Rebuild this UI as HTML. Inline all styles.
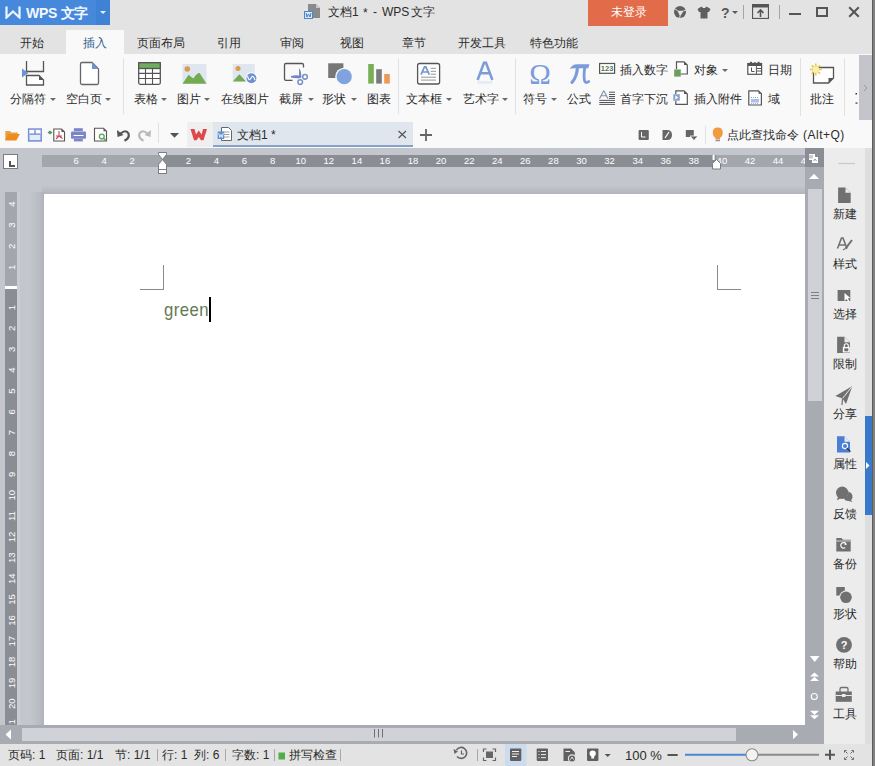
<!DOCTYPE html>
<html><head><meta charset="utf-8">
<style>
*{box-sizing:border-box;margin:0;padding:0}
html,body{width:875px;height:766px;overflow:hidden;background:#808080}
body{position:relative;font-family:"Liberation Sans",sans-serif;font-size:12px;color:#333}
.a{position:absolute}
.t{position:absolute;white-space:nowrap;line-height:1;font-size:12px;color:#2b2b2b}
#win{position:absolute;left:0;top:0;width:872px;height:766px;background:#e3e3e3;overflow:hidden}
.sep{position:absolute;width:1px;background:#e1e1e1}
.dd{position:absolute;width:0;height:0;border-left:3px solid transparent;border-right:3px solid transparent;border-top:3px solid #6a6a6a}
.rn{position:absolute;top:157px;font-size:10px;line-height:1;color:#fff;transform:translateX(-50%);white-space:nowrap}
.vn{position:absolute;left:6px;width:10px;font-size:10px;line-height:10px;color:#fff;text-align:center;transform:rotate(-90deg)}
.sb{position:absolute;left:824px;width:41px;text-align:center}
</style></head><body>
<div id="win">
  <!-- title bar -->
  <div class="a" style="left:0;top:0;width:110px;height:25px;background:#4689dc"></div>
  <div class="a" style="left:96px;top:0;width:14px;height:25px;background:#3f82d5"></div>
  <svg class="a" style="left:5px;top:5px" width="16" height="14" viewBox="0 0 16 14"><path d="M1.5 1.5 V12.5 L8 6.5 L14.5 12.5 V1.5" fill="none" stroke="#eef6ff" stroke-width="2.2" stroke-linejoin="miter"/></svg>
  <div class="t" style="left:26px;top:6px;font-size:14px;font-weight:bold;color:#f4f8ff;letter-spacing:-0.3px">WPS 文字</div>
  <div class="a" style="left:100px;top:11px;width:0;height:0;border-left:3px solid transparent;border-right:3px solid transparent;border-top:3px solid #e8f0fa"></div>
  <svg class="a" style="left:303px;top:3px" width="20" height="17" viewBox="0 0 20 17"><path d="M5 1 H13 L17 5 V15 H5 Z" fill="#8a8a8a"/><path d="M13 1 V5 H17" fill="#c8c8c8"/><rect x="1.5" y="8.5" width="8" height="7" fill="#dfeaf7" stroke="#4a86cf"/><path d="M3 10 L4 14 L5.5 11 L7 14 L8 10" fill="none" stroke="#3d7cc9" stroke-width="1"/></svg>
  <div class="t" style="left:328px;top:6px;font-size:12px;color:#2b2b2b">文档1</div><div class="t" style="left:363px;top:7px;font-size:12px;color:#2b2b2b">*</div><div class="t" style="left:373px;top:6px;font-size:12px;color:#2b2b2b">-</div><div class="t" style="left:382px;top:6px;font-size:12px;color:#2b2b2b;letter-spacing:0px">WPS</div><div class="t" style="left:411px;top:6px;font-size:12px;color:#2b2b2b">文字</div>
  <div class="a" style="left:588px;top:0;width:80px;height:26px;background:#e26b4a"></div>
  <div class="t" style="left:611px;top:6px;font-size:12px;color:#fff">未登录</div>
  <svg class="a" style="left:673px;top:5px" width="15" height="15" viewBox="0 0 15 15"><circle cx="7" cy="7" r="6" fill="#5f5f5f"/><path d="M4 5.3 Q7.5 6.3 11 5.5 Q9 8.5 7 11.5 Q6 8.3 4 5.3 Z" fill="#e3e3e3"/><path d="M1.5 3.8 L4.3 5.5 M13 5 L10.8 5.8 M6.6 13.2 L7 11" stroke="#e3e3e3" stroke-width="0.9"/></svg>
  <svg class="a" style="left:697px;top:6px" width="14" height="13" viewBox="0 0 14 13"><path d="M4.5 0.5 L6 2 H8 L9.5 0.5 L13.5 3 L12 6 H10.5 V12.5 H3.5 V6 H2 L0.5 3 Z" fill="#5e5e5e"/></svg>
  <div class="t" style="left:721px;top:6px;font-size:14px;color:#5a5a5a;font-weight:bold">?</div>
  <div class="a" style="left:732px;top:11px;width:0;height:0;border-left:3px solid transparent;border-right:3px solid transparent;border-top:3px solid #5a5a5a"></div>
  <div class="a" style="left:743px;top:5px;width:1px;height:14px;background:#a5a5a5"></div>
  <svg class="a" style="left:752px;top:4px" width="17" height="15" viewBox="0 0 17 15"><rect x="0.5" y="0" width="16" height="3.5" fill="#555"/><rect x="0.5" y="0.5" width="16" height="14" fill="none" stroke="#555" stroke-width="1.2"/><path d="M8.5 13 V6 M5.5 9 L8.5 6 L11.5 9" fill="none" stroke="#555" stroke-width="1.6"/></svg>
  <div class="a" style="left:779px;top:5px;width:1px;height:14px;background:#a5a5a5"></div>
  <div class="a" style="left:789px;top:13px;width:12px;height:2px;background:#555"></div>
  <div class="a" style="left:816px;top:7px;width:12px;height:10px;border:2px solid #555;border-top-width:2px"></div>
  <svg class="a" style="left:848px;top:6px" width="12" height="12" viewBox="0 0 12 12"><path d="M1.2 1.2 L10.8 10.8 M10.8 1.2 L1.2 10.8" stroke="#555" stroke-width="2"/></svg>

  <!-- tabs -->
  <div class="a" style="left:66px;top:30px;width:58px;height:24px;background:#f9f9f9"></div>
  <div class="t" style="left:20px;top:37px">开始</div>
  <div class="t" style="left:83px;top:37px;color:#2d5a8e">插入</div>
  <div class="t" style="left:137px;top:37px">页面布局</div>
  <div class="t" style="left:217px;top:37px">引用</div>
  <div class="t" style="left:280px;top:37px">审阅</div>
  <div class="t" style="left:340px;top:37px">视图</div>
  <div class="t" style="left:402px;top:37px">章节</div>
  <div class="t" style="left:458px;top:37px">开发工具</div>
  <div class="t" style="left:530px;top:37px">特色功能</div>

  <!-- ribbon -->
  <div class="a" style="left:0;top:54px;width:872px;height:94px;background:#f9f9f9"></div>
  <div class="t" style="left:10px;top:93px">分隔符</div><div class="dd" style="left:50px;top:98px"></div>
  <div class="t" style="left:66px;top:93px">空白页</div><div class="dd" style="left:105px;top:98px"></div>
  <div class="sep" style="left:123px;top:58px;height:56px"></div>
  <div class="t" style="left:134px;top:93px">表格</div><div class="dd" style="left:161px;top:98px"></div>
  <div class="t" style="left:177px;top:93px">图片</div><div class="dd" style="left:204px;top:98px"></div>
  <div class="t" style="left:221px;top:93px">在线图片</div>
  <div class="t" style="left:279px;top:93px">截屏</div><div class="dd" style="left:308px;top:98px"></div>
  <div class="t" style="left:322px;top:93px">形状</div><div class="dd" style="left:351px;top:98px"></div>
  <div class="t" style="left:367px;top:93px">图表</div>
  <div class="sep" style="left:398px;top:58px;height:56px"></div>
  <div class="t" style="left:406px;top:93px">文本框</div><div class="dd" style="left:446px;top:98px"></div>
  <div class="t" style="left:463px;top:93px">艺术字</div><div class="dd" style="left:502px;top:98px"></div>
  <div class="sep" style="left:515px;top:58px;height:56px"></div>
  <div class="t" style="left:523px;top:93px">符号</div><div class="dd" style="left:551px;top:98px"></div>
  <div class="t" style="left:567px;top:93px">公式</div>
  <div class="t" style="left:620px;top:64px">插入数字</div>
  <div class="t" style="left:620px;top:93px">首字下沉</div>
  <div class="t" style="left:694px;top:64px">对象</div><div class="dd" style="left:722px;top:69px"></div>
  <div class="t" style="left:694px;top:93px">插入附件</div>
  <div class="t" style="left:768px;top:64px">日期</div>
  <div class="t" style="left:768px;top:93px">域</div>
  <div class="sep" style="left:800px;top:58px;height:58px"></div>
  <div class="t" style="left:810px;top:93px">批注</div>
  <div class="sep" style="left:844px;top:58px;height:58px"></div>
  <div class="a" style="left:859px;top:55px;width:13px;height:65px;background:#c4c5ca"></div>

  <!-- QAT + doc tab -->
  <div class="sep" style="left:158px;top:123px;height:20px"></div>
  <div class="a" style="left:187px;top:122px;width:26px;height:25px;background:#efefef"></div>
  <div class="a" style="left:213px;top:122px;width:200px;height:25px;background:#dfe6ee;border-bottom:2px solid #86a3c6"></div>
  <div class="t" style="left:237px;top:129px">文档1 *</div>
  <div class="t" style="left:727px;top:129px">点此查找命令</div><div class="t" style="left:803px;top:129px;letter-spacing:0.5px">(Alt+Q)</div>
  <div class="sep" style="left:705px;top:126px;height:18px"></div>

  <!-- workspace -->
  <div class="a" style="left:0;top:148px;width:872px;height:596px;background:#c4c6cd"></div>
  <div class="a" style="left:3px;top:154px;width:15px;height:15px;background:#fff;border:1px solid #7a7b80"></div>
  <div class="a" style="left:9px;top:161px;width:2px;height:6px;background:#555"></div><div class="a" style="left:9px;top:165px;width:6px;height:2px;background:#555"></div>
  <div class="a" style="left:42px;top:155px;width:763px;height:12px;background:#a4a6ae"></div>
  <div class="a" style="left:162px;top:155px;width:554px;height:12px;background:#8b8d95"></div>
  <div class="a" style="left:5px;top:192px;width:12px;height:533px;background:#8b8d95"></div>
  <div class="a" style="left:5px;top:192px;width:12px;height:94px;background:#a4a6ae"></div>
  <div class="a" style="left:5px;top:286px;width:12px;height:3px;background:#fff"></div>
  <div class="a" style="left:42px;top:186px;width:763px;height:8px;background:linear-gradient(#c3c5cc,#b3b5bc)"></div>
  <div class="a" style="left:30px;top:192px;width:14px;height:533px;background:linear-gradient(90deg,rgba(176,178,185,0),rgba(176,178,185,0.55) 70%,#b0b2b9)"></div>
  <div class="a" style="left:17px;top:192px;width:3px;height:533px;background:#cbccd3"></div>
  <div class="a" style="left:44px;top:194px;width:761px;height:531px;background:#fff"></div>

  <!-- v scrollbar -->
  <div class="a" style="left:805px;top:148px;width:19px;height:596px;background:#a9abb3"></div>
  <div class="a" style="left:808px;top:189px;width:14px;height:212px;background:#d0d1d6"></div>
  <!-- h scrollbar -->
  <div class="a" style="left:0;top:725px;width:805px;height:19px;background:#a9abb3"></div>
  <div class="a" style="left:22px;top:728px;width:714px;height:13px;background:#d1d2d7"></div>

  <!-- sidebar -->
  <div class="a" style="left:824px;top:148px;width:41px;height:596px;background:#ececec"></div>
  <div class="a" style="left:865px;top:148px;width:7px;height:596px;background:#dedede"></div>
  <div class="a" style="left:865px;top:416px;width:7px;height:99px;background:#3a78c9"></div>
  <div class="t sb" style="top:208px">新建</div>
  <div class="t sb" style="top:258px">样式</div>
  <div class="t sb" style="top:308px">选择</div>
  <div class="t sb" style="top:358px">限制</div>
  <div class="t sb" style="top:408px">分享</div>
  <div class="t sb" style="top:458px">属性</div>
  <div class="t sb" style="top:508px">反馈</div>
  <div class="t sb" style="top:558px">备份</div>
  <div class="t sb" style="top:608px">形状</div>
  <div class="t sb" style="top:658px">帮助</div>
  <div class="t sb" style="top:708px">工具</div>

  <!-- page content -->
  <div class="a" style="left:163px;top:265px;width:1px;height:25px;background:#8a8a8a"></div>
  <div class="a" style="left:140px;top:289px;width:24px;height:1px;background:#8a8a8a"></div>
  <div class="a" style="left:717px;top:265px;width:1px;height:25px;background:#8a8a8a"></div>
  <div class="a" style="left:717px;top:289px;width:24px;height:1px;background:#8a8a8a"></div>
  <div class="t" style="left:164px;top:300px;font-size:19px;color:#637a52;transform:scaleX(0.88);transform-origin:0 0;letter-spacing:0.5px">green</div>
  <div class="a" style="left:209px;top:297px;width:2px;height:25px;background:#000"></div>

  <!-- status bar -->
  <div class="t" style="left:8px;top:749px">页码: 1</div>
  <div class="t" style="left:56px;top:749px">页面: 1/1</div>
  <div class="t" style="left:115px;top:749px">节: 1/1</div>
  <div class="t" style="left:162px;top:749px">行: 1</div>
  <div class="t" style="left:194px;top:749px">列: 6</div>
  <div class="t" style="left:232px;top:749px">字数: 1</div>
  <div class="t" style="left:289px;top:749px">拼写检查</div>
  <div class="t" style="left:625px;top:749px;font-size:13px">100 %</div>

  <svg class="a" style="left:0;top:0" width="872" height="766" viewBox="0 0 872 766">
    <defs><clipPath id="hr"><rect x="42" y="150" width="763" height="20"/></clipPath><clipPath id="vr"><rect x="0" y="192" width="20" height="533"/></clipPath></defs>
    <g clip-path="url(#hr)" font-family="Liberation Sans" font-size="9.5" fill="#fff" text-anchor="middle"><text x="76.1" y="164">6</text><text x="104.1" y="164">4</text><text x="132.2" y="164">2</text><text x="188.4" y="164">2</text><text x="216.5" y="164">4</text><text x="244.5" y="164">6</text><text x="272.6" y="164">8</text><text x="300.7" y="164">10</text><text x="328.8" y="164">12</text><text x="356.9" y="164">14</text><text x="384.9" y="164">16</text><text x="413.0" y="164">18</text><text x="441.1" y="164">20</text><text x="469.2" y="164">22</text><text x="497.3" y="164">24</text><text x="525.3" y="164">26</text><text x="553.4" y="164">28</text><text x="581.5" y="164">30</text><text x="609.6" y="164">32</text><text x="637.7" y="164">34</text><text x="665.7" y="164">36</text><text x="693.8" y="164">38</text><text x="721.9" y="164">40</text><text x="750.0" y="164">42</text><text x="778.1" y="164">44</text><text x="806.1" y="164">46</text></g>
    <g clip-path="url(#vr)" font-family="Liberation Sans" font-size="9.5" fill="#fff" text-anchor="middle"><text transform="translate(15,267.4) rotate(-90)">1</text><text transform="translate(15,246.3) rotate(-90)">2</text><text transform="translate(15,225.2) rotate(-90)">3</text><text transform="translate(15,204.1) rotate(-90)">4</text><text transform="translate(15,307.6) rotate(-90)">1</text><text transform="translate(15,328.4) rotate(-90)">2</text><text transform="translate(15,349.3) rotate(-90)">3</text><text transform="translate(15,370.1) rotate(-90)">4</text><text transform="translate(15,391.0) rotate(-90)">5</text><text transform="translate(15,411.9) rotate(-90)">6</text><text transform="translate(15,432.7) rotate(-90)">7</text><text transform="translate(15,453.6) rotate(-90)">8</text><text transform="translate(15,474.4) rotate(-90)">9</text><text transform="translate(15,495.2) rotate(-90)">10</text><text transform="translate(15,516.1) rotate(-90)">11</text><text transform="translate(15,537.0) rotate(-90)">12</text><text transform="translate(15,557.8) rotate(-90)">13</text><text transform="translate(15,578.7) rotate(-90)">14</text><text transform="translate(15,599.5) rotate(-90)">15</text><text transform="translate(15,620.4) rotate(-90)">16</text><text transform="translate(15,641.2) rotate(-90)">17</text><text transform="translate(15,662.0) rotate(-90)">18</text><text transform="translate(15,682.9) rotate(-90)">19</text><text transform="translate(15,703.8) rotate(-90)">20</text><text transform="translate(15,724.6) rotate(-90)">21</text></g>
    <!-- left indent marker -->
    <path d="M158.5 152.5 H166.5 V154.5 L162.5 159.5 L166.5 164.5 V169.5 H158.5 V164.5 L162.5 159.5 L158.5 154.5 Z" fill="#fff" stroke="#7b7d84" stroke-width="1"/>
    <rect x="158.5" y="169.5" width="8" height="4" fill="#fff" stroke="#7b7d84" stroke-width="1"/>
    <!-- right indent marker -->
    <path d="M712.5 169 V163.5 L716.5 159.5 L720.5 163.5 V169 Z" fill="#fff" stroke="#7b7d84" stroke-width="1"/>
    <rect x="712.6" y="155" width="2" height="5" fill="#fff"/>
    <!-- v scroll top dark & icon -->
    <rect x="805" y="148" width="19" height="19" fill="#8b8d94"/>
    <path d="M809 154 H815 V157 H818 V163 H812 V160 H809 Z" fill="#fff"/>
    <path d="M810 155 V158.5 M812 155 V158.5 M813.5 161 L815 159 L816.5 161" stroke="#8b8d94" stroke-width="0.9" fill="none"/>
    <path d="M809 179 L814 173.8 L819 179 Z" fill="#fff"/>
    <path d="M811 292.5 H819 M811 295.5 H819 M811 298.5 H819" stroke="#7d7f86" stroke-width="1"/>
    <path d="M809.8 656 H819.6 L814.7 662 Z" fill="#fff"/>
    <path d="M810 676.5 L814.5 672.4 L819 676.5 Z M810 680.9 L814.5 676.8 L819 680.9 Z" fill="#fff"/>
    <circle cx="814.3" cy="696.5" r="3" fill="none" stroke="#fff" stroke-width="1.1"/>
    <path d="M810 710.8 L814.5 714.9 L819 710.8 Z M810 715.2 L814.5 719.3 L819 715.2 Z" fill="#fff"/>
    <!-- h scroll -->
    <path d="M11 729.5 L5.5 734.5 L11 739.5 Z" fill="#fff"/>
    <path d="M793 730 L798 734.6 L793 739.3 Z" fill="#fff"/>
    <path d="M374.5 729 V737.5 M378.5 729 V737.5 M382.5 729 V737.5" stroke="#6e6e73" stroke-width="1"/>
    <!-- sidebar top line -->
    <path d="M838.5 163.5 H855" stroke="#c9c9c9" stroke-width="1.2"/>
  </svg>

  <svg class="a" style="left:0;top:0" width="872" height="766" viewBox="0 0 872 766">
    <!-- sidebar icons -->
    <path d="M838.1 187.6 H845.5 L850.7 192.8 V202.9 H838.1 Z" fill="#707070"/>
    <path d="M845.5 187.6 V192.8 H850.7 Z" fill="#ececec"/>
    <path d="M837.5 248.5 L841.5 238 H843 L847 248.5 M839 245 H845.5" fill="none" stroke="#707070" stroke-width="1.6"/>
    <path d="M845.5 248.6 L852 240" stroke="#707070" stroke-width="2"/>
    <path d="M843 250 L845.5 248.6" stroke="#707070" stroke-width="1.2"/>
    <rect x="837.6" y="290" width="12.7" height="11" fill="#707070"/>
    <path d="M844.5 293 V301 L846.5 299 L848.5 302 L849.5 301.3 L847.8 298.5 L850.3 298 Z" fill="#fff"/>
    <path d="M837.1 336.8 H844.5 L849.9 342.2 V353 H837.1 Z" fill="#707070"/>
    <path d="M844.5 336.8 V342.2 H849.9 Z" fill="#ececec"/>
    <rect x="842.8" y="347" width="7" height="5.5" fill="#fff"/>
    <path d="M844.3 347 V345 Q846.3 342.5 848.3 345 V347" fill="none" stroke="#fff" stroke-width="1.2"/>
    <rect x="844.3" y="348.3" width="4" height="3" fill="#707070"/>
    <path d="M835.4 396 L852.4 386 L846 404 L842.5 398.5 Z" fill="#707070"/>
    <path d="M842.5 398.5 L852.4 386" stroke="#ececec" stroke-width="1"/>
    <path d="M842.5 398.5 L842 405" stroke="#707070" stroke-width="1.2"/>
    <path d="M837 436.3 H844.5 L850 441.8 V452.4 H837 Z" fill="#4a7fd4"/>
    <path d="M844.5 436.3 V441.8 H850 Z" fill="#ececec"/>
    <circle cx="845" cy="446" r="2.6" fill="#4a7fd4" stroke="#fff" stroke-width="1.1"/>
    <path d="M846.8 448 L850.5 451.7" stroke="#333" stroke-width="1.2"/>
    <circle cx="842.2" cy="492.8" r="6.2" fill="#707070"/>
    <path d="M838 497 L836.8 500.5 L841 498 Z" fill="#707070"/>
    <path d="M848.5 491.5 Q852.5 493 852.5 496.5 Q852.5 499 851 500 L852.5 502 L848.5 501 Q845 501 844 498.5 Q848 497.5 848.5 491.5 Z" fill="#707070"/>
    <path d="M836.3 538 H841.5 L843 539.8 H850.7 V551.4 H836.3 Z" fill="#707070"/>
    <path d="M836.3 541 H850.7" stroke="#ececec" stroke-width="0.8"/>
    <path d="M846 544 A2.8 2.8 0 1 0 845.3 547.6" fill="none" stroke="#fff" stroke-width="1.2"/>
    <path d="M845 542.5 L847 544.5 L844.5 545.2 Z" fill="#fff"/>
    <rect x="836.3" y="587" width="8.5" height="8.6" fill="#707070"/>
    <circle cx="846" cy="597.3" r="6.8" fill="#ececec"/>
    <circle cx="846" cy="597.3" r="5.8" fill="#707070"/>
    <circle cx="844" cy="644.9" r="7.9" fill="#707070"/>
    <text x="844" y="649" font-family="Liberation Sans" font-weight="bold" font-size="11" fill="#fff" text-anchor="middle">?</text>
    <path d="M840 692 V689 Q840 687.5 841.5 687.5 H846.5 Q848 687.5 848 689 V692" fill="none" stroke="#707070" stroke-width="1.3"/>
    <rect x="835.7" y="691.5" width="16.1" height="10.3" fill="#707070"/>
    <path d="M835.7 695.5 H851.8" stroke="#ececec" stroke-width="1"/>
    <rect x="842" y="694" width="3.5" height="3" fill="#ececec"/>
    <path d="M866 462 L869.5 465.5 L866 469 Z" fill="#fff"/>

    <!-- status bar icons -->
    <path d="M477.5 749 V761 M157.5 749 V761 M225.5 749 V761 M274.5 749 V761 M340.5 749 V761" stroke="#a8a8a8" stroke-width="1"/>
    <path d="M456.5 750 A5.5 5.5 0 1 1 457 756.5" fill="none" stroke="#666" stroke-width="1.6"/>
    <path d="M453.5 749 L458 751.5 L454.5 754 Z" fill="#666"/>
    <path d="M461.5 750.5 V754 H464" fill="none" stroke="#666" stroke-width="1.2"/>
    <path d="M483.5 752 V749 H486.5 M492.5 749 H495.5 V752 M495.5 757.5 V760.5 H492.5 M486.5 760.5 H483.5 V757.5" fill="none" stroke="#666" stroke-width="1.2"/>
    <rect x="486" y="751.5" width="7" height="6.5" fill="#666"/>
    <rect x="505" y="744" width="21.5" height="22" fill="#cddbee"/>
    <rect x="510" y="748.5" width="11.3" height="12.4" rx="0.8" fill="#606060"/>
    <path d="M512 751.5 H519 M512 754 H519 M512 756.5 H517" stroke="#fff" stroke-width="0.9"/>
    <rect x="536.7" y="748.5" width="11.3" height="12.4" rx="0.8" fill="#606060"/>
    <path d="M538.5 751.5 H539.5 M541 751.5 H546 M538.5 754.6 H539.5 M541 754.6 H546 M538.5 757.7 H539.5 M541 757.7 H546" stroke="#fff" stroke-width="0.9"/>
    <path d="M563.5 748.5 H571 L574.8 752.3 V760.9 H563.5 Z" fill="#606060"/>
    <path d="M565.5 751.5 H570" stroke="#fff" stroke-width="0.9"/>
    <circle cx="572" cy="758.5" r="3.6" fill="#606060" stroke="#e3e3e3" stroke-width="1.2"/>
    <path d="M570.5 759.5 L572 757 L573.5 759.5" fill="none" stroke="#fff" stroke-width="0.8"/>
    <rect x="587" y="748.5" width="11.4" height="12.4" rx="0.8" fill="#606060"/>
    <path d="M592.7 750.5 Q589.5 750.5 589.5 753.5 Q589.5 755.5 591.3 756.5 V758.5 H594.1 V756.5 Q595.9 755.5 595.9 753.5 Q595.9 750.5 592.7 750.5 Z" fill="#fff"/>
    <path d="M604.6 754 H610.8 L607.7 757 Z" fill="#555"/>
    <path d="M667.5 755 H677.7" stroke="#555" stroke-width="2"/>
    <path d="M685 754.8 H746" stroke="#4a86d4" stroke-width="2"/>
    <path d="M746 754.8 H819" stroke="#8a8a8a" stroke-width="2"/>
    <circle cx="752" cy="754.8" r="6" fill="#f3f3f3" stroke="#8a8a8a" stroke-width="1.1"/>
    <path d="M825 754.8 H835 M830 749.8 V759.8" stroke="#555" stroke-width="2"/>
    <path d="M844.5 752.5 V750.5 H846.5 M851.5 750.5 H853.5 V752.5 M853.5 757.5 V759.5 H851.5 M846.5 759.5 H844.5 V757.5 M845.5 751.5 L847.5 753.5 M852.5 751.5 L850.5 753.5 M852.5 758.5 L850.5 756.5 M845.5 758.5 L847.5 756.5" fill="none" stroke="#666" stroke-width="1"/>
    <rect x="278.5" y="752.5" width="6.5" height="7" fill="#4fae4a"/>
  </svg>

  <!-- icon overlay -->
  <svg class="a" style="left:0;top:0" width="872" height="766" viewBox="0 0 872 766">
    <!-- 分隔符 -->
    <path d="M26.5 61 V71.5 H43.5 V61" fill="none" stroke="#555" stroke-width="1.3"/>
    <path d="M26.5 85 V75.5 H39 L43.5 80 V85 Z" fill="#fff" stroke="#555" stroke-width="1.3"/>
    <path d="M39 75.5 V80 H43.5 Z" fill="#555"/>
    <path d="M22 68.5 L28.5 73 L22 77.5 Z" fill="#6d93d6"/>
    <!-- 空白页 -->
    <path d="M80.5 64 Q80.5 62.5 82 62.5 H92 L98.5 69 V83 Q98.5 84.5 97 84.5 H82 Q80.5 84.5 80.5 83 Z" fill="#fff" stroke="#666" stroke-width="1.3"/>
    <path d="M92 62.5 L98.5 69 H92 Z" fill="#6d93d6"/>
    <!-- 表格 -->
    <rect x="138.7" y="62.7" width="21.6" height="21.6" rx="1.5" fill="#fff" stroke="#555" stroke-width="1.3"/>
    <rect x="138.7" y="62.7" width="21.6" height="5.8" fill="#6fae5f" stroke="#555" stroke-width="1.3"/>
    <path d="M145.5 68.5 V84.3 M152.5 68.5 V84.3 M138.7 73.4 H160.3 M138.7 78.5 H160.3" stroke="#555" stroke-width="1.1"/>
    <!-- 图片 -->
    <rect x="182.5" y="64" width="24" height="19.7" fill="#dfe6ef"/>
    <circle cx="187.3" cy="69" r="2.8" fill="#da9a52"/>
    <path d="M182.5 83.7 L188.6 74.8 Q191 77 193.4 78.6 Q196.5 72.9 199.6 72.9 L206.5 83.7 Z" fill="#74aa52"/>
    <!-- 在线图片 -->
    <rect x="232.7" y="64" width="22" height="17.5" fill="#dfe6ef"/>
    <circle cx="238" cy="68.6" r="2.5" fill="#da9a52"/>
    <path d="M232.7 81.5 L239.4 74.3 L246 81.5 Z" fill="#74aa52"/>
    <circle cx="251.4" cy="78.2" r="6" fill="#fff"/>
    <circle cx="251.4" cy="78.2" r="5" fill="#6f8fd0"/>
    <path d="M247.5 76 Q249 82 251 78 Q253 74 255 80" fill="none" stroke="#fff" stroke-width="1.1"/>
    <!-- 截屏 -->
    <path d="M292.5 80.4 H286 Q284.5 80.4 284.5 79 V65 Q284.5 63.5 286 63.5 H302 Q303.5 63.5 303.5 65 V67.5" fill="none" stroke="#555" stroke-width="1.3"/>
    <path d="M299 68 Q301.8 71.5 301.2 78 H299.2 Z" fill="#6f86c2"/>
    <path d="M291 76 Q296 74.8 300.5 75.8 V78 Q296 78.6 291 77.6 Z" fill="#6f86c2"/>
    <circle cx="305" cy="76.8" r="2.3" fill="#fff" stroke="#7d93c6" stroke-width="1.6"/>
    <circle cx="300.2" cy="82.1" r="2.3" fill="#fff" stroke="#7d93c6" stroke-width="1.6"/>
    <!-- 形状 -->
    <rect x="328.2" y="63.3" width="15.2" height="14.7" fill="#777"/>
    <circle cx="344.2" cy="76.7" r="9" fill="#f9f9f9"/>
    <circle cx="344.2" cy="76.7" r="7.6" fill="#80a3e0"/>
    <!-- 图表 -->
    <rect x="368.2" y="64" width="5.6" height="19.6" fill="#78ae55"/>
    <rect x="376.2" y="69.2" width="5.6" height="14.4" fill="#7a7a7a"/>
    <rect x="384.2" y="74" width="5.6" height="9.6" fill="#ee9a55"/>
    <!-- 文本框 -->
    <rect x="417.6" y="63.5" width="22" height="20.5" rx="2" fill="#fff" stroke="#555" stroke-width="1.3"/>
    <path d="M421 74.7 L424.5 66.8 H425.8 L429.3 74.7 M422.3 72 H428" fill="none" stroke="#7595cf" stroke-width="1.7"/>
    <path d="M430.7 68.3 H436 M430.7 71.3 H436 M430.7 74.2 H436 M421 77.2 H436 M421 80.1 H436" stroke="#8a8a8a" stroke-width="0.9"/>
    <!-- 艺术字 -->
    <defs><linearGradient id="refl" x1="0" y1="0" x2="0" y2="1"><stop offset="0" stop-color="#dae3f4"/><stop offset="1" stop-color="#f9f9f9"/></linearGradient></defs>
    <path d="M477.6 80 L484 62.8 H486 L492.4 80 M480.3 73.3 H489.7" fill="none" stroke="#7b9bdb" stroke-width="2.5" stroke-linejoin="miter"/>
    <path d="M477 81.5 H493 L491 85 H479 Z" fill="url(#refl)"/>
    <text x="540" y="83.8" font-family="Liberation Serif" font-size="29" fill="#7b9bdb" text-anchor="middle">Ω</text>
    <path d="M569.8 69 Q572 64.2 577 64.2 H589.5 L588.2 68.2 H573.5 Q571.5 68.2 569.8 69 Z" fill="#7b9bdb"/>
    <path d="M577.5 67 Q577 77 572 82.3" fill="none" stroke="#7b9bdb" stroke-width="3.2" stroke-linecap="round"/>
    <path d="M584.8 67 Q583.5 76 584.5 80.5 Q585.5 84 588.8 81.5" fill="none" stroke="#7b9bdb" stroke-width="2.8" stroke-linecap="round"/>
    <!-- 123 -->
    <rect x="599.6" y="63.5" width="15" height="9.8" fill="#fff" stroke="#555" stroke-width="1.2"/>
    <text x="607.1" y="71.3" font-size="7.5" font-family="Liberation Sans" text-anchor="middle" fill="#4d7a4d" font-weight="bold">123</text>
    <!-- 首字下沉 -->
    <path d="M599.5 98.8 L603.5 91 H604 L608 98.8 M601.3 95.8 H606.2" fill="none" stroke="#7f90a8" stroke-width="1.1"/>
    <path d="M609 92.2 H615 M609 94.5 H615 M609 96.5 H615 M609 98.4 H615 M599.3 100.4 H615 M599.3 102.5 H615 M599.3 104.4 H615" stroke="#555" stroke-width="1"/>
    <!-- 对象 -->
    <path d="M676.5 69 V61.8 H684 L687.3 65.1 V74 H681" fill="#fff" stroke="#555" stroke-width="1.2"/>
    <path d="M684 61.8 V65.1 H687.3 Z" fill="#555"/>
    <rect x="674.2" y="69.4" width="6.6" height="7.2" fill="#6a9e5a"/>
    <!-- 插入附件 -->
    <path d="M675.8 94 V90.8 H684 L687.3 94.1 V104.3 H675.8 V100.7" fill="#fff" stroke="#555" stroke-width="1.2"/>
    <path d="M684 90.8 V94.1 H687.3 Z" fill="#555"/>
    <rect x="673.3" y="94.2" width="6.5" height="6.5" fill="#88a3cf"/>
    <path d="M675.3 95.5 L678.3 97.45 L675.3 99.4 Z" fill="#fff"/>
    <!-- 日期 -->
    <rect x="747.8" y="63.5" width="13.8" height="10.8" fill="#fff" stroke="#555" stroke-width="1.2"/>
    <rect x="747.8" y="63" width="13.8" height="3" fill="#555"/>
    <rect x="750" y="61.8" width="2" height="2" fill="#555"/><rect x="753.8" y="62.3" width="2" height="2" fill="#555"/><rect x="757.6" y="61.8" width="2" height="2" fill="#555"/>
    <path d="M751.5 67.5 V71.5 H754.5 M756.4 66 V74 M757 68.5 H761 M757 71 H761" fill="none" stroke="#555" stroke-width="1"/>
    <!-- 域 -->
    <path d="M748.8 90.9 H758.5 L761.4 93.8 V105 H748.8 Z" fill="#fff" stroke="#555" stroke-width="1.2"/>
    <path d="M758.5 90.9 V93.8 H761.4 Z" fill="#555"/>
    <rect x="751" y="99" width="8" height="3.5" fill="#a9c0e8"/>
    <path d="M751 97.5 H759 M751 103.7 H759" stroke="#6d8fd0" stroke-width="0.8" stroke-dasharray="1 1"/>
    <!-- 批注 -->
    <path d="M813.5 67.5 H833.5 V78 L828.5 83 H813.5 Z" fill="#fff" stroke="#555" stroke-width="1.3"/>
    <path d="M833.5 78 L828.5 83 V78 Z" fill="#555"/>
    <g stroke="#e8c94a" stroke-width="1.6"><path d="M815.8 63.5 V75.5 M809.8 69.5 H821.8 M811.6 65.3 L820 73.7 M820 65.3 L811.6 73.7"/></g>
    <circle cx="815.8" cy="69.5" r="3.2" fill="#fbf0a8"/>
    <rect x="855.5" y="93" width="1.5" height="1.5" fill="#333"/><rect x="855.5" y="102.5" width="2" height="1.2" fill="#333"/>
    <!-- ribbon more arrow -->
    <path d="M864 85 L867 88 L864 91" fill="none" stroke="#9a9ba0" stroke-width="1"/>

    <!-- QAT -->
    <path d="M5.3 140.5 V131 H10 L11.5 132.5 H17.7 V134" fill="#e9a04a"/>
    <path d="M7.9 133.9 H19.9 L16.3 140.5 H5.3 Z" fill="#ef8a1d"/>
    <rect x="28.7" y="129.1" width="12.5" height="11.8" fill="#e2edfa" stroke="#7b8fd6" stroke-width="1.6"/>
    <rect x="29.5" y="129.9" width="10.9" height="4" fill="#fbfcff"/>
    <path d="M29.5 134.2 H40.4 M35 130 V134" stroke="#6f84cf" stroke-width="1.3"/>
    <path d="M53.8 129 H61.5 L64.5 132 V141 H53.8 Z" fill="#fff" stroke="#555" stroke-width="1.1"/>
    <path d="M61.5 129 V132 H64.5 Z" fill="#555"/>
    <path d="M59 131 V136 L56 139 M59 136 L62.5 138.5 M56 136 H62" fill="none" stroke="#c44b5a" stroke-width="1.1"/>
    <path d="M47.5 132.5 L50 130.5 L52.5 132.5 L50 134.5 Z" fill="#4f9a5a"/>
    <rect x="73.9" y="128.2" width="8.9" height="3" fill="#7c86c6"/>
    <rect x="71" y="131.5" width="15" height="7.3" rx="1" fill="#7c86c6"/>
    <rect x="73.5" y="135" width="10" height="1" fill="#fff"/>
    <rect x="73.9" y="138.8" width="8.9" height="2.6" fill="#7c86c6"/>
    <path d="M94.5 128.2 H103.5 L106.5 131.2 V141 H94.5 Z" fill="#fff" stroke="#555" stroke-width="1.1"/>
    <path d="M103.5 128.2 V131.2 H106.5 Z" fill="#555"/>
    <circle cx="101.8" cy="136.6" r="2.4" fill="#fff" stroke="#5aa35a" stroke-width="1.3"/>
    <path d="M103.5 138.3 L106 140.8" stroke="#5aa35a" stroke-width="1.6"/>
    <path d="M120.5 133.5 Q126 129 128.5 133.5 Q130 138 124.5 140.8" fill="none" stroke="#555" stroke-width="2.2"/>
    <path d="M117 130 L117.5 137 L123.5 135 Z" fill="#555"/>
    <path d="M147.5 133.5 Q142 129 139.5 133.5 Q138 138 143.5 140.8" fill="none" stroke="#b8b8b8" stroke-width="2.2"/>
    <path d="M151 130 L150.5 137 L144.5 135 Z" fill="#b8b8b8"/>
    <path d="M170 133 H179 L174.5 137.8 Z" fill="#555"/>
    <path d="M190.5 129 H194.5 L196 134.5 L198.8 130.5 L201.6 134.5 L203 129 H207 L203.5 140.3 H201 L198.8 137 L196.6 140.3 H194 Z" fill="#e0474a"/>
    <!-- doc tab icon -->
    <path d="M221.5 127.5 H228.5 L231.5 130.5 V140.5 H221.5 Z" fill="#fff" stroke="#666" stroke-width="1"/>
    <path d="M223.5 132 H229.5 M223.5 134.5 H229.5 M223.5 137 H229.5" stroke="#888" stroke-width="0.8"/>
    <rect x="217.7" y="131.5" width="6.5" height="7.5" fill="#5b8fd4"/>
    <path d="M218.7 133 L219.8 137.5 L221 134.5 L222.2 137.5 L223.3 133" fill="none" stroke="#fff" stroke-width="0.8"/>
    <path d="M398.5 131 L406 138 M406 131 L398.5 138" stroke="#555" stroke-width="1.2"/>
    <path d="M420 135 H432 M426 129 V141" stroke="#666" stroke-width="1.8"/>
    <!-- QAT right icons -->
    <rect x="638.6" y="130" width="10.2" height="10" rx="1" fill="#666"/>
    <path d="M641.5 132 V137 H645.5" fill="none" stroke="#fff" stroke-width="1"/>
    <path d="M662.5 130 H667 Q672 130 672 135 Q672 140 667 140 H662.5 Z" fill="#666"/>
    <path d="M665 138 L669 132" stroke="#fff" stroke-width="1.2"/>
    <rect x="685.8" y="130" width="8" height="7" fill="#666"/>
    <path d="M690 136 H698 L694 140.5 Z" fill="#666" stroke="#f9f9f9" stroke-width="0.8"/>
    <path d="M717.7 127.6 Q712.7 127.6 712.7 133 Q712.7 136 715.5 138 V139 H720 V138 Q722.8 136 722.8 133 Q722.8 127.6 717.7 127.6 Z" fill="#f19a42"/>
    <rect x="715.5" y="139.5" width="4.5" height="1.8" fill="#999"/>
  </svg>
</div>
<div class="a" style="left:872px;top:0;width:1px;height:766px;background:#5e5e5e"></div>
</body></html>
